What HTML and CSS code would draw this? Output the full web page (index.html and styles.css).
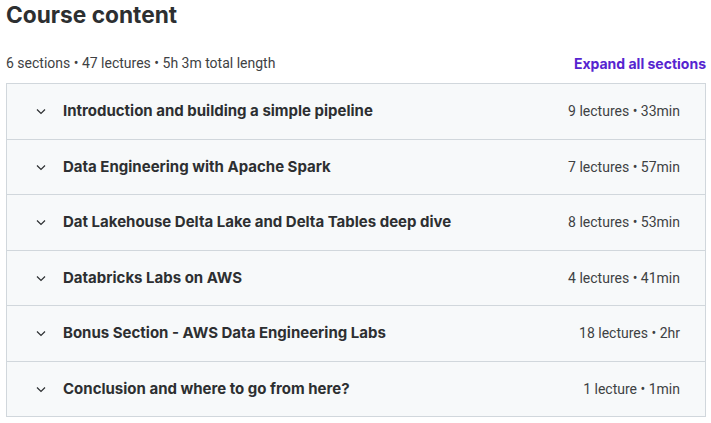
FILE: index.html
```html
<!DOCTYPE html>
<html lang="en">
<head>
    <meta charset="UTF-8">
    <meta name="viewport" content="width=device-width, initial-scale=1.0">
    <title>Course content</title>
    <link rel="stylesheet" href="styles.css">
</head>
<body>
    <div class="curriculum">
        <h2 class="title">Course content</h2>

        <div class="summary">
            <span class="summary-text">6 sections • 47 lectures • 5h 3m total length</span>
            <button class="expand-all">Expand all sections</button>
        </div>

        <div class="sections">
            <div class="section">
                <svg class="chevron" viewBox="0 0 16 16"><path d="M4 6.5l4 4 4-4"/></svg>
                <span class="section-title">Introduction and building a simple pipeline</span>
                <span class="section-meta">9 lectures • 33min</span>
            </div>
            <div class="section">
                <svg class="chevron" viewBox="0 0 16 16"><path d="M4 6.5l4 4 4-4"/></svg>
                <span class="section-title">Data Engineering with Apache Spark</span>
                <span class="section-meta">7 lectures • 57min</span>
            </div>
            <div class="section">
                <svg class="chevron" viewBox="0 0 16 16"><path d="M4 6.5l4 4 4-4"/></svg>
                <span class="section-title">Dat Lakehouse Delta Lake and Delta Tables deep dive</span>
                <span class="section-meta">8 lectures • 53min</span>
            </div>
            <div class="section">
                <svg class="chevron" viewBox="0 0 16 16"><path d="M4 6.5l4 4 4-4"/></svg>
                <span class="section-title">Databricks Labs on AWS</span>
                <span class="section-meta">4 lectures • 41min</span>
            </div>
            <div class="section">
                <svg class="chevron" viewBox="0 0 16 16"><path d="M4 6.5l4 4 4-4"/></svg>
                <span class="section-title">Bonus Section - AWS Data Engineering Labs</span>
                <span class="section-meta">18 lectures • 2hr</span>
            </div>
            <div class="section">
                <svg class="chevron" viewBox="0 0 16 16"><path d="M4 6.5l4 4 4-4"/></svg>
                <span class="section-title">Conclusion and where to go from here?</span>
                <span class="section-meta">1 lecture • 1min</span>
            </div>
        </div>
    </div>
</body>
</html>
```

FILE: styles.css
```css
body {
    margin: 0;
    background: #fff;
    color: #2d2f31;
    font-family: 'Inter', 'Liberation Sans', sans-serif;
}

.curriculum {
    padding: 0 5px 0 6px;
}

.title {
    margin: 0;
    font-size: 22.7px;
    line-height: 29px;
    font-weight: 700;
}

.summary {
    display: flex;
    justify-content: space-between;
    align-items: center;
    margin-top: 24px;
    font-size: 14px;
    line-height: 20px;
}

.summary-text,
.section-meta {
    font-family: 'Roboto', 'Liberation Sans', sans-serif;
    font-size: 14px;
    color: #3e4143;
}

.expand-all {
    background: none;
    border: none;
    padding: 0;
    font-family: inherit;
    font-size: 14px;
    font-weight: 700;
    color: #5624d0;
    cursor: pointer;
}

.sections {
    margin-top: 10px;
    border: 1px solid #d1d7dc;
    border-bottom: none;
}

.section {
    display: flex;
    align-items: center;
    padding: 16px 25px 16px 26px;
    line-height: 22.5px;
    background: #f7f9fa;
    border-bottom: 1px solid #d1d7dc;
}

.chevron {
    width: 16px;
    height: 16px;
    margin-right: 14px;
    fill: none;
    stroke: #2d2f31;
    stroke-width: 1.2;
    flex-shrink: 0;
}

.section-title {
    flex: 1;
    font-size: 15px;
    font-weight: 700;
}
```
